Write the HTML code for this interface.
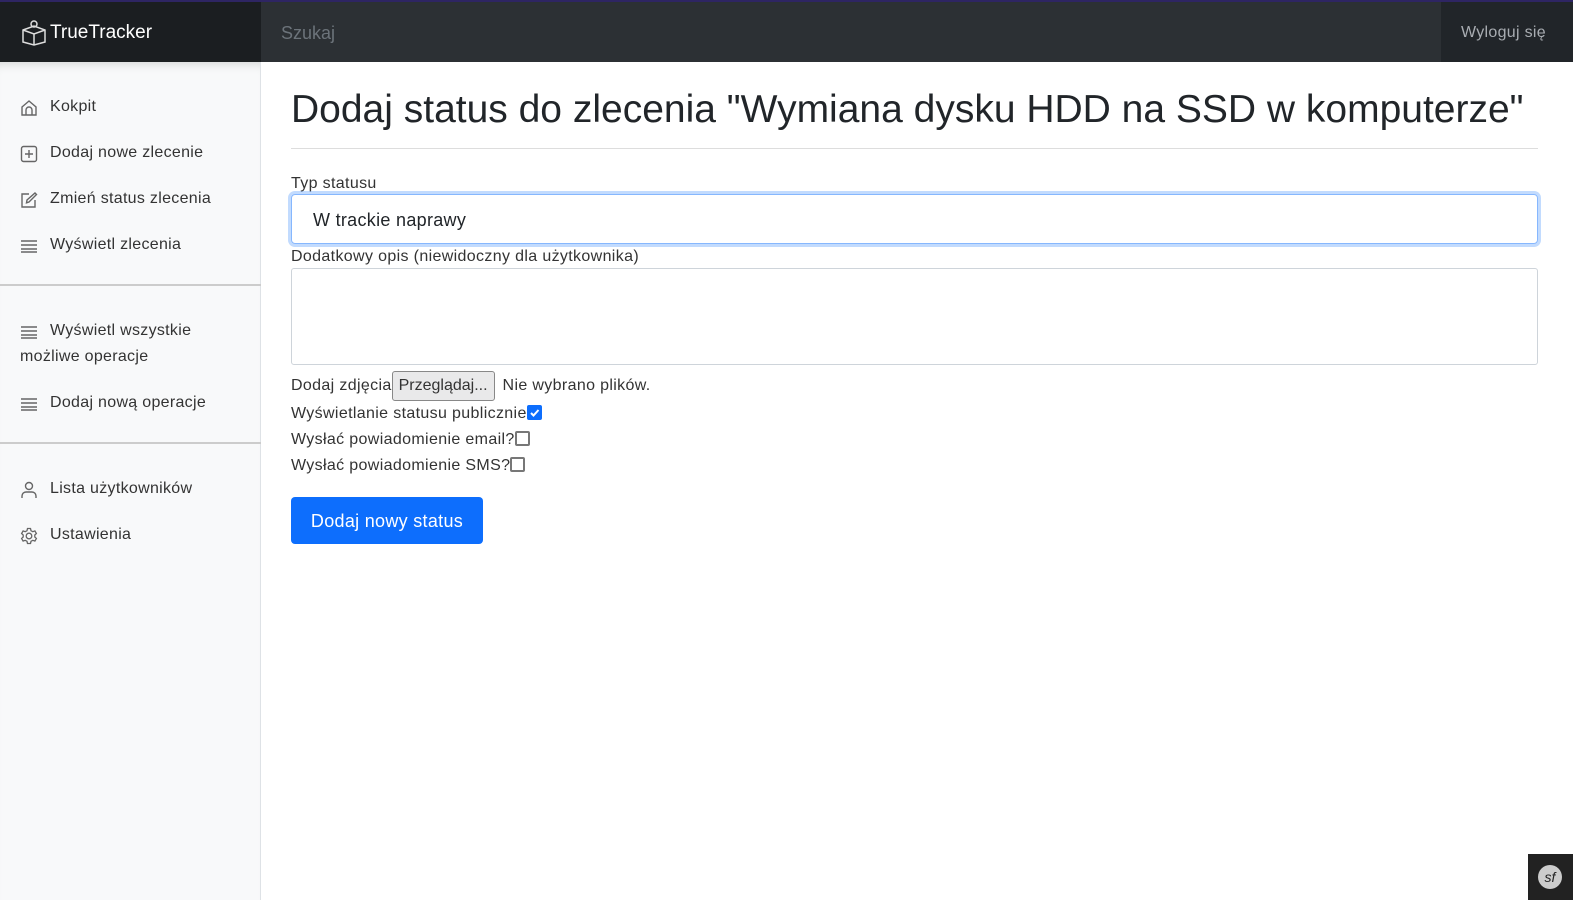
<!DOCTYPE html>
<html><head><meta charset="utf-8"><style>
*{box-sizing:border-box}
body{margin:0;width:1573px;height:900px;overflow:hidden;font-family:"Liberation Sans",sans-serif;color:#212529;background:#fff;position:relative;font-size:16px}
.top{position:absolute;left:0;top:0;width:1573px;height:2px;background:#2e2563}
.nav{position:absolute;left:0;top:2px;width:1573px;height:60px;background:#2c3034}
.brand{position:absolute;left:0;top:0;width:261px;height:60px;background:#1b1e21;color:#fff;font-size:19px;line-height:62px;padding-left:50px}
.search{position:absolute;left:281px;top:0;line-height:62px;color:#6c737a;font-size:18px}
.logout{position:absolute;right:0;top:0;width:132px;height:60px;background:#212529;color:#a9adb2;line-height:62px;font-size:16px;padding-left:20px;letter-spacing:.3px}
.side{position:absolute;left:0;top:62px;width:261px;height:838px;background:#f8f9fa;border-right:1px solid #dee2e6;box-shadow:inset 0 10px 10px -8px rgba(0,0,0,.15)}
.it{position:absolute;left:20px;font-size:16px;color:#333;line-height:26px;letter-spacing:.3px}
.it svg{position:absolute;left:0;top:5px}
.it span{padding-left:30px}
.hr{position:absolute;left:0;width:261px;height:2px;background:#ccc}
.main{position:absolute;left:291px;top:62px;width:1247px}
h1{margin:0;position:absolute;top:26px;left:0;font-weight:400;font-size:39px;white-space:nowrap}
.line{position:absolute;top:86px;left:0;width:1247px;height:1px;background:#ddd}
.lbl{position:absolute;left:0;font-size:16px;color:#333;letter-spacing:.35px;white-space:nowrap}
.sel{position:absolute;left:0;top:132px;width:1247px;height:50px;border:1px solid #86b7fe;border-radius:4px;box-shadow:0 0 0 3px rgba(13,110,253,.25);padding-left:21px;line-height:50px;font-size:18px;letter-spacing:.3px}
.ta{position:absolute;left:0;top:206px;width:1247px;height:97px;border:1px solid #ced4da;border-radius:3px}
.cb{display:inline-block;width:15px;height:15px;border:2px solid #777;border-radius:2px;vertical-align:-2px}
.btn{position:absolute;left:0;top:435px;width:192px;height:47px;background:#0d6efd;color:#fff;border-radius:4px;font-size:18px;line-height:49px;text-align:center;letter-spacing:.3px}
</style></head><body>
<div class="top"></div>
<div class="nav">
<div class="brand"><svg style="position:absolute;left:21px;top:16px" width="26" height="28" viewBox="0 0 26 28" fill="none" stroke="#ddd" stroke-width="1.5"><circle cx="13" cy="6" r="3"/><path d="M2 12l11-4 11 4v12l-11 3-11-3z M2 12l11 4 11-4 M13 16v11"/></svg>TrueTracker</div>
<div class="search">Szukaj</div>
<div class="logout">Wyloguj się</div>
</div>
<div class="side">
<div class="it" style="top:32px"><svg width="18" height="18" viewBox="0 0 18 18" fill="none" stroke="#666" stroke-width="1.4"><path d="M2 8l7-6 7 6v8H2z M6 16v-5a3 3 0 0 1 6 0v5"/></svg><span>Kokpit</span></div>
<div class="it" style="top:78px"><svg width="18" height="18" viewBox="0 0 18 18" fill="none" stroke="#666" stroke-width="1.4"><rect x="1.5" y="1.5" width="15" height="15" rx="2"/><path d="M9 5v8M5 9h8"/></svg><span>Dodaj nowe zlecenie</span></div>
<div class="it" style="top:124px"><svg width="18" height="18" viewBox="0 0 18 18" fill="none" stroke="#666" stroke-width="1.4"><path d="M9 3H2v13h13V9 M15 2l1.5 1.5L9 11l-2.5.8L7 9z"/></svg><span>Zmień status zlecenia</span></div>
<div class="it" style="top:170px"><svg width="18" height="18" viewBox="0 0 18 18" stroke="#666" stroke-width="1.6"><path d="M1 4h16M1 8h16M1 12h16M1 15h16"/></svg><span>Wyświetl zlecenia</span></div>
<div class="hr" style="top:222px"></div>
<div class="it" style="top:256px;width:230px"><svg width="18" height="18" viewBox="0 0 18 18" stroke="#666" stroke-width="1.6"><path d="M1 4h16M1 8h16M1 12h16M1 15h16"/></svg><span>Wyświetl wszystkie</span><br>możliwe operacje</div>
<div class="it" style="top:328px"><svg width="18" height="18" viewBox="0 0 18 18" stroke="#666" stroke-width="1.6"><path d="M1 4h16M1 8h16M1 12h16M1 15h16"/></svg><span>Dodaj nową operacje</span></div>
<div class="hr" style="top:380px"></div>
<div class="it" style="top:414px"><svg width="18" height="18" viewBox="0 0 18 18" fill="none" stroke="#666" stroke-width="1.4"><circle cx="9" cy="5" r="3.5"/><path d="M2 17v-2a4 4 0 0 1 4-4h6a4 4 0 0 1 4 4v2"/></svg><span>Lista użytkowników</span></div>
<div class="it" style="top:460px"><svg width="18" height="18" viewBox="0 0 18 18" fill="none" stroke="#666" stroke-width="1.3"><circle cx="9" cy="9" r="2.8"/><path d="M7.5 1.5h3l.5 2.2 1.8 1 2.1-.8 1.5 2.6-1.6 1.5v2l1.6 1.5-1.5 2.6-2.1-.8-1.8 1-.5 2.2h-3l-.5-2.2-1.8-1-2.1.8-1.5-2.6 1.6-1.5v-2L1.6 6.5l1.5-2.6 2.1.8 1.8-1z"/></svg><span>Ustawienia</span></div>
</div>
<div class="main">
<h1>Dodaj status do zlecenia "Wymiana dysku HDD na SSD w komputerze"</h1>
<div class="line"></div>
<div class="lbl" style="top:113px">Typ statusu</div>
<div class="sel">W trackie naprawy</div>
<div class="lbl" style="top:186px">Dodatkowy opis (niewidoczny dla użytkownika)</div>
<div class="ta"></div>
<div class="lbl" style="top:309px;line-height:30px">Dodaj zdjęcia<span style="display:inline-block;border:1px solid #888;background:#e9e9ea;border-radius:3px;padding:0 6px;line-height:28px;margin-right:8px;letter-spacing:0">Przeglądaj...</span>Nie wybrano plików.</div>
<div class="lbl" style="top:343px">Wyświetlanie statusu publicznie<span class="cb" style="background:#0d6efd;border-color:#0d6efd;position:relative"><svg style="position:absolute;left:0;top:0" width="11" height="11" viewBox="0 0 11 11" fill="none" stroke="#fff" stroke-width="2"><path d="M2 6l2.5 2.5L9.5 3"/></svg></span></div>
<div class="lbl" style="top:369px">Wysłać powiadomienie email?<span class="cb"></span></div>
<div class="lbl" style="top:395px">Wysłać powiadomienie SMS?<span class="cb"></span></div>
<div class="btn">Dodaj nowy status</div>
</div>
<div style="position:absolute;right:0;bottom:0;width:45px;height:46px;background:#222"><div style="position:absolute;left:10px;top:11px;width:24px;height:24px;border-radius:50%;background:#ccc;color:#222;font-style:italic;font-size:14px;text-align:center;line-height:24px">sf</div></div>
</body></html>
